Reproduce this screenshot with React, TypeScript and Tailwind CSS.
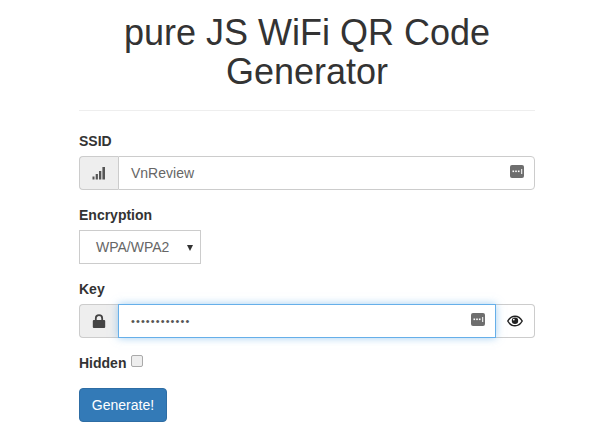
function KeyDots() {
  return (
    <svg width="14" height="13" viewBox="0 0 14 13" className="absolute right-[10px] top-[8px]">
      <rect width="14" height="13" rx="2" fill="#6e6e6e" />
      <rect x="2.5" y="5.5" width="1.6" height="1.6" fill="#fff" />
      <rect x="5.2" y="5.5" width="1.6" height="1.6" fill="#fff" />
      <rect x="7.9" y="5.5" width="1.6" height="1.6" fill="#fff" />
      <rect x="11.2" y="4" width="1" height="5" fill="#fff" />
    </svg>
  )
}

function Signal() {
  return (
    <svg width="14" height="14" viewBox="0 0 14 14" fill="#555">
      <rect x="0.5" y="10.5" width="2" height="3" />
      <rect x="3.7" y="8" width="2.2" height="5.5" />
      <rect x="7" y="5" width="2.3" height="8.5" />
      <rect x="10.4" y="1" width="2.6" height="12.5" />
    </svg>
  )
}

function Lock() {
  return (
    <svg width="14" height="14" viewBox="0 0 14 14">
      <path d="M3.8 6.5V4.4a3.2 3.2 0 0 1 6.4 0v2.1" fill="none" stroke="#444" strokeWidth="1.8" />
      <rect x="0.8" y="6" width="12.4" height="8" rx="1" fill="#444" />
    </svg>
  )
}

function Eye() {
  return (
    <svg width="16" height="14" viewBox="0 0 16 14">
      <path d="M0.8 7C2.6 3.8 5 2.2 8 2.2S13.4 3.8 15.2 7C13.4 10.2 11 11.8 8 11.8S2.6 10.2 0.8 7Z" fill="none" stroke="#222" strokeWidth="1.5" />
      <circle cx="8" cy="6.8" r="3.2" fill="#222" />
      <circle cx="6.8" cy="5.6" r="0.9" fill="#fff" />
    </svg>
  )
}

export default function App() {
  return (
    <div className="w-[600px] h-[441px] overflow-hidden bg-white font-['Liberation_Sans',Arial,sans-serif] text-[14px] text-[#333]">
      <div className="ml-[79px] w-[456px]">
        <h1 className="pt-[14px] text-center text-[36px] leading-[38.6px] text-[#333]">
          pure JS WiFi QR Code Generator
        </h1>
        <div className="mt-[19px] border-t border-[#eee]" />

        <label className="mt-[20px] block h-[20px] text-[14px] leading-[20px] font-bold">SSID</label>
        <div className="mt-[5px] flex h-[34px]">
          <span className="flex w-[39px] items-center justify-center rounded-l border border-r-0 border-[#ccc] bg-[#eee]">
            <Signal />
          </span>
          <div className="relative flex-1 rounded-r border border-[#ccc] px-3 text-[14px] leading-[32px] text-[#666]">
            VnReview
            <KeyDots />
          </div>
        </div>

        <label className="mt-[15px] block h-[20px] text-[14px] leading-[20px] font-bold">Encryption</label>
        <div className="mt-[5px] flex h-[34px] w-[122px] items-center border border-[#ccc] pl-4 text-[14px] text-[#666]">
          <span className="flex-1">WPA/WPA2</span>
          <span className="mr-[7px] mt-[1px] h-0 w-0 border-x-[3px] border-t-[6px] border-x-transparent border-t-[#333]" />
        </div>

        <label className="mt-[15px] block h-[20px] text-[14px] leading-[20px] font-bold">Key</label>
        <div className="mt-[5px] flex h-[34px]">
          <span className="flex w-[39px] items-center justify-center rounded-l border border-r-0 border-[#ccc] bg-[#eee]">
            <Lock />
          </span>
          <div className="relative flex-1 border border-[#66afe9] px-3 text-[11px] leading-[32px] tracking-[1.1px] text-[#555] shadow-[0_0_8px_rgba(102,175,233,0.6)]">
            ••••••••••••
            <KeyDots />
          </div>
          <span className="flex w-[39px] items-center justify-center rounded-r border border-l-0 border-[#ccc]">
            <Eye />
          </span>
        </div>

        <div className="mt-[15px] flex h-[20px] items-center">
          <label className="text-[14px] leading-[20px] font-bold">Hidden</label>
          <span className="mb-[4px] ml-[5px] h-[12px] w-[12px] rounded-[2px] border border-[#aaa] bg-[#eee]" />
        </div>

        <button className="mt-[15px] block h-[34px] w-[88px] rounded border border-[#2e6da4] bg-[#337ab7] text-[14px] text-white">
          Generate!
        </button>
      </div>
    </div>
  )
}
